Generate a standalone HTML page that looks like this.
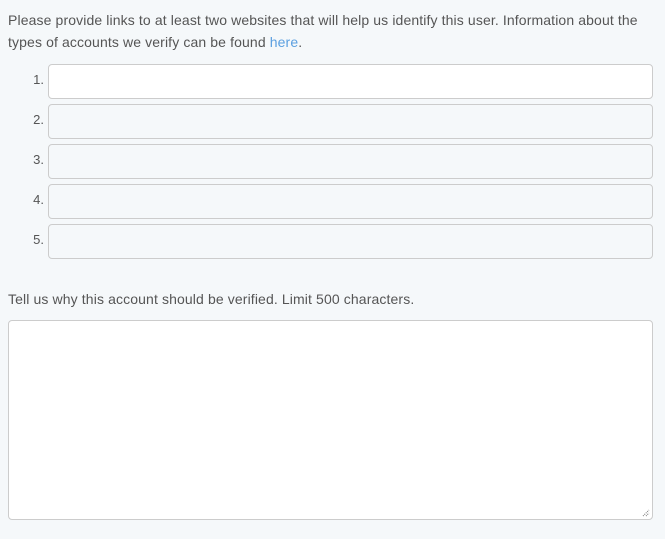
<!DOCTYPE html>
<html><head><style>
body{margin:0;background:#f5f8fa;font-family:"Liberation Sans",sans-serif;font-size:14px;color:#66757f;width:665px;height:539px;overflow:hidden;position:relative}
p{margin:0;position:absolute;left:8px;line-height:22px;color:#555;letter-spacing:0.12px}
a{color:#5b9fe0;text-decoration:none}
.n{position:absolute;left:30px;width:14px;text-align:right;font-size:13px;color:#555}
.i{position:absolute;left:48px;width:603px;height:33px;border:1px solid #ccc;border-radius:4px;background:#f5f8fa;box-sizing:content-box}
.ta{position:absolute;left:8px;top:320px;width:643px;height:198px;border:1px solid #ccc;border-radius:4px;background:#fff}
</style></head><body>
<p style="top:9px">Please provide links to at least two websites that will help us identify this user. Information about the<br>types of accounts we verify can be found <a>here</a>.</p>
<div class="n" style="top:72px">1.</div><div class="i" style="top:64px;background:#fff"></div>
<div class="n" style="top:112px">2.</div><div class="i" style="top:104px"></div>
<div class="n" style="top:152px">3.</div><div class="i" style="top:144px"></div>
<div class="n" style="top:192px">4.</div><div class="i" style="top:184px"></div>
<div class="n" style="top:232px">5.</div><div class="i" style="top:224px"></div>
<p style="top:288px">Tell us why this account should be verified. Limit 500 characters.</p>
<div class="ta"><svg style="position:absolute;right:2px;bottom:2px" width="8" height="8"><path d="M1 7L7 1M4 7L7 4" stroke="#777" stroke-width="1" stroke-dasharray="1 1"/></svg></div>
</body></html>
